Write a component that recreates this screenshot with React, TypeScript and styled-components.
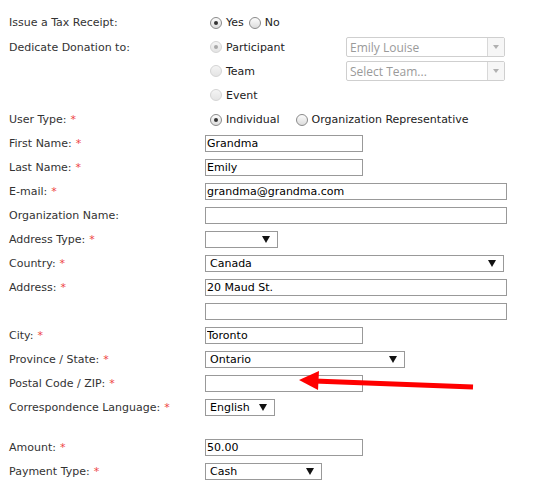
import styled, { createGlobalStyle } from "styled-components";

const GlobalStyle = createGlobalStyle`
  body {
    margin: 0;
    background: #ffffff;
  }
`;

const Page = styled.div`
  position: relative;
  width: 539px;
  height: 483px;
  overflow: hidden;
  padding: 10px 0 0 9px;
  box-sizing: border-box;
  font-family: "DejaVu Sans", Verdana, sans-serif;
`;

const Row = styled.div<{ $h?: number; $top?: boolean }>`
  display: grid;
  grid-template-columns: 196px 1fr;
  align-items: ${(p) => (p.$top ? "start" : "center")};
  height: ${(p) => p.$h ?? 24}px;
`;

const Label = styled.div`
  font-size: 11px;
  line-height: 25px;
  color: #333333;
  white-space: nowrap;
`;

const Req = styled.span`
  color: #ee4444;
  margin-left: 4px;
`;

const Control = styled.div`
  display: flex;
  align-items: center;
  height: 24px;
`;

const Spacer = styled.div`
  height: 16px;
`;

const TextInput = styled.input<{ $w: number }>`
  display: block;
  width: ${(p) => p.$w}px;
  height: 17px;
  box-sizing: border-box;
  border: 1px solid #999999;
  padding: 0 0 0 1px;
  margin: 0;
  font-family: "DejaVu Sans", Verdana, sans-serif;
  font-size: 11px;
  color: #000000;
  background: #ffffff;
  outline: none;
`;

const SelectBox = styled.div<{ $w: number }>`
  width: ${(p) => p.$w}px;
  height: 17px;
  box-sizing: border-box;
  border: 1px solid #999999;
  padding: 0 7px 0 4px;
  display: flex;
  align-items: center;
  justify-content: space-between;
  font-size: 11px;
  color: #000000;
  background: #ffffff;
`;

const Caret = styled.span`
  width: 0;
  height: 0;
  border-left: 4px solid transparent;
  border-right: 4px solid transparent;
  border-top: 7px solid #111111;
`;

const RadioLine = styled.div`
  display: flex;
  align-items: center;
  height: 24px;
  font-size: 11px;
  color: #222222;
  padding-left: 5px;
`;

const RadioItem = styled.label<{ $gap?: number }>`
  display: flex;
  align-items: center;
  margin-right: ${(p) => p.$gap ?? 5}px;
`;

const Radio = styled.span<{ $checked?: boolean; $disabled?: boolean }>`
  width: 12px;
  height: 12px;
  box-sizing: border-box;
  border-radius: 50%;
  border: 1px solid ${(p) => (p.$disabled ? "#d4d4d4" : "#8a8a8a")};
  background: ${(p) =>
    p.$disabled
      ? "linear-gradient(#f4f4f4, #e4e4e4)"
      : "linear-gradient(#fcfcfc, #dcdcdc)"};
  margin-right: 4px;
  display: flex;
  align-items: center;
  justify-content: center;
  &::after {
    content: "";
    display: ${(p) => (p.$checked ? "block" : "none")};
    width: 4px;
    height: 4px;
    border-radius: 50%;
    background: ${(p) => (p.$disabled ? "#a8a8a8" : "#333333")};
  }
`;

const DedicateGrid = styled.div`
  display: grid;
  grid-template-columns: 141px 159px;
  grid-auto-rows: 24px;
  align-items: center;
`;

const Combo = styled.div`
  height: 20px;
  box-sizing: border-box;
  border: 1px solid #cfcfcf;
  border-radius: 2px;
  display: flex;
  align-items: stretch;
  font-family: "Open Sans", "DejaVu Sans", sans-serif;
  font-size: 12px;
  color: #9a9a9a;
  background: #ffffff;
`;

const ComboText = styled.span`
  flex: 1;
  display: flex;
  align-items: center;
  padding-left: 3px;
`;

const ComboButton = styled.span`
  width: 16px;
  border-left: 1px solid #d8d8d8;
  background: #f6f6f6;
  display: flex;
  align-items: center;
  justify-content: center;
`;

const SmallCaret = styled.span`
  width: 0;
  height: 0;
  border-left: 3px solid transparent;
  border-right: 3px solid transparent;
  border-top: 4px solid #b0b0b0;
`;

const ArrowOverlay = styled.svg`
  position: absolute;
  left: 0;
  top: 0;
  pointer-events: none;
`;

type Field = {
  kind: "input" | "select";
  label: string;
  req?: boolean;
  w: number;
  value?: string;
};

const contactFields: Field[] = [
  { kind: "input", label: "First Name:", req: true, w: 158, value: "Grandma" },
  { kind: "input", label: "Last Name:", req: true, w: 158, value: "Emily" },
  { kind: "input", label: "E-mail:", req: true, w: 302, value: "grandma@grandma.com" },
  { kind: "input", label: "Organization Name:", w: 302 },
  { kind: "select", label: "Address Type:", req: true, w: 73 },
  { kind: "select", label: "Country:", req: true, w: 299, value: "Canada" },
  { kind: "input", label: "Address:", req: true, w: 302, value: "20 Maud St." },
  { kind: "input", label: "", w: 302 },
  { kind: "input", label: "City:", req: true, w: 158, value: "Toronto" },
  { kind: "select", label: "Province / State:", req: true, w: 200, value: "Ontario" },
  { kind: "input", label: "Postal Code / ZIP:", req: true, w: 158 },
  { kind: "select", label: "Correspondence Language:", req: true, w: 70, value: "English" },
];

const paymentFields: Field[] = [
  { kind: "input", label: "Amount:", req: true, w: 158, value: "50.00" },
  { kind: "select", label: "Payment Type:", req: true, w: 117, value: "Cash" },
];

function FieldRow({ field }: { field: Field }) {
  return (
    <Row>
      <Label>
        {field.label}
        {field.req && <Req>*</Req>}
      </Label>
      <Control>
        {field.kind === "input" ? (
          <TextInput $w={field.w} value={field.value ?? ""} readOnly />
        ) : (
          <SelectBox $w={field.w}>
            <span>{field.value ?? ""}</span>
            <Caret />
          </SelectBox>
        )}
      </Control>
    </Row>
  );
}

export default function App() {
  return (
    <Page>
      <GlobalStyle />
      <Row $h={25}>
        <Label>Issue a Tax Receipt:</Label>
        <RadioLine>
          <RadioItem>
            <Radio $checked />
            Yes
          </RadioItem>
          <RadioItem>
            <Radio />
            No
          </RadioItem>
        </RadioLine>
      </Row>
      <Row $h={72} $top>
        <Label>Dedicate Donation to:</Label>
        <DedicateGrid>
          <RadioLine>
            <RadioItem>
              <Radio $checked $disabled />
              Participant
            </RadioItem>
          </RadioLine>
          <Combo>
            <ComboText>Emily Louise</ComboText>
            <ComboButton>
              <SmallCaret />
            </ComboButton>
          </Combo>
          <RadioLine>
            <RadioItem>
              <Radio $disabled />
              Team
            </RadioItem>
          </RadioLine>
          <Combo>
            <ComboText>Select Team...</ComboText>
            <ComboButton>
              <SmallCaret />
            </ComboButton>
          </Combo>
          <RadioLine>
            <RadioItem>
              <Radio $disabled />
              Event
            </RadioItem>
          </RadioLine>
        </DedicateGrid>
      </Row>
      <Row>
        <Label>
          User Type:<Req>*</Req>
        </Label>
        <RadioLine>
          <RadioItem $gap={16}>
            <Radio $checked />
            Individual
          </RadioItem>
          <RadioItem>
            <Radio />
            Organization Representative
          </RadioItem>
        </RadioLine>
      </Row>
      {contactFields.map((f, i) => (
        <FieldRow key={i} field={f} />
      ))}
      <Spacer />
      {paymentFields.map((f, i) => (
        <FieldRow key={i} field={f} />
      ))}
      <ArrowOverlay width={539} height={483}>
        <line x1={473} y1={387} x2={314} y2={381} stroke="#ff0000" strokeWidth={5} />
        <polygon points="299,380 319,371 318,390" fill="#ff0000" />
      </ArrowOverlay>
    </Page>
  );
}
